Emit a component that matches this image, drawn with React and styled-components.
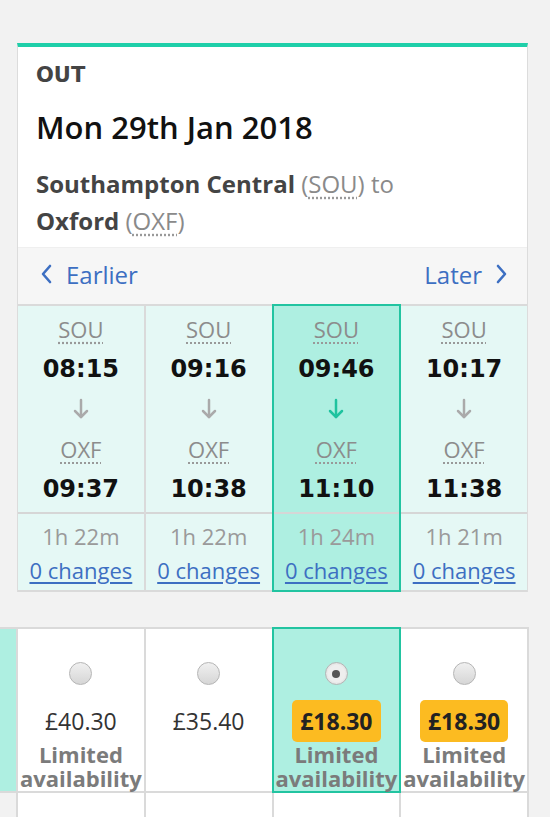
import React from "react";
import styled, { createGlobalStyle, css } from "styled-components";

const Global = createGlobalStyle`
  html, body { margin: 0; padding: 0; background: #f2f2f2; }
  body { font-family: "Open Sans", "Noto Sans", sans-serif; }
  * { box-sizing: border-box; }
`;

const Page = styled.div`
  width: 550px;
  height: 817px;
  padding-top: 43px;
  overflow: hidden;
`;

const Card = styled.section`
  margin-left: 17px;
  width: 511px;
  border-top: 4px solid #1fcfa9;
  border-left: 1px solid #dcdcdc;
  border-right: 1px solid #dcdcdc;
  background: #fff;
`;

const Header = styled.header`
  padding: 14px 18px 8px;
`;

const Direction = styled.div`
  font: 700 21px/28px "DejaVu Sans", sans-serif;
  color: #444;
`;

const DateTitle = styled.h1`
  margin: 18px 0 0;
  font: 600 31px/40px "Open Sans", sans-serif;
  color: #111;
`;

const Route = styled.p`
  margin: 18px 0 0;
  font: 400 24px/37px "Open Sans", sans-serif;
  color: #8a8a8a;
`;

const Station = styled.strong`
  font-weight: 700;
  color: #444;
`;

const Code = styled.span`
  text-decoration: underline dotted #999;
  text-underline-offset: 4px;
`;

const Nav = styled.nav`
  display: flex;
  justify-content: space-between;
  align-items: center;
  height: 57px;
  padding: 0 19px 4px 22px;
  background: #f6f6f6;
  border-top: 1px solid #efefef;
`;

const NavLink = styled.a`
  display: flex;
  align-items: center;
  gap: 13px;
  color: #3d6fc2;
  font-size: 24px;
  text-decoration: none;
`;

const Journeys = styled.div`
  display: grid;
  grid-template-columns: repeat(4, 1fr);
  gap: 2px;
  background: #dadada;
  border-top: 2px solid #dadada;
  border-bottom: 2px solid #dadada;
`;

const Journey = styled.div`
  position: relative;
  display: flex;
  flex-direction: column;
  text-align: center;
  background: ${(p) => (p.$selected ? "#aeefe1" : "#e5f8f5")};
  ${(p) =>
    p.$selected &&
    css`
      z-index: 1;
      box-shadow: 0 0 0 2px #22c4a1;
    `}
`;

const Times = styled.div`
  display: flex;
  flex-direction: column;
  padding: 3px 0;
`;

const Slot = styled.div`
  height: 40px;
  display: flex;
  align-items: center;
  justify-content: center;
`;

const StationCode = styled.span`
  font-size: 22px;
  color: #8c8c8c;
  text-decoration: underline dotted #999;
  text-underline-offset: 4px;
`;

const Time = styled.span`
  font: 700 24px "DejaVu Sans", sans-serif;
  color: #111;
`;

const Summary = styled.div`
  border-top: 2px solid #d6d6d6;
  padding: 5px 0 3px;
  line-height: 34px;
  font-size: 22px;
`;

const Duration = styled.div`
  color: #9a9a9a;
`;

const Changes = styled.a`
  display: block;
  color: #3d6fc2;
  text-decoration: underline;
  text-underline-offset: 3px;
`;

const Prices = styled.div`
  margin-top: 35px;
  width: 529px;
  display: grid;
  grid-template-columns: 16px repeat(4, 1fr);
  grid-auto-rows: 162px;
  gap: 2px;
  background: #dadada;
  border-top: 2px solid #dadada;
  border-right: 2px solid #dadada;
`;

const Strip = styled.div`
  background: ${(p) => (p.$active ? "#aeefe1" : "#f2f2f2")};
`;

const PriceCell = styled.div`
  position: relative;
  display: flex;
  flex-direction: column;
  align-items: center;
  padding-top: 33px;
  background: ${(p) => (p.$selected ? "#aeefe1" : "#fff")};
  ${(p) =>
    p.$selected &&
    css`
      z-index: 1;
      box-shadow: 0 0 0 2px #22c4a1;
    `}
`;

const Radio = styled.span`
  width: 23px;
  height: 23px;
  border-radius: 50%;
  border: 1px solid #b5b5b5;
  background: linear-gradient(#f0f0f0, #d6d6d6);
  display: flex;
  align-items: center;
  justify-content: center;
  margin-bottom: 15px;
  &::after {
    content: "";
    width: 8px;
    height: 8px;
    border-radius: 50%;
    background: ${(p) => (p.$checked ? "#555" : "transparent")};
  }
  ${(p) =>
    p.$checked &&
    css`
      background: radial-gradient(#eee 55%, #cfcfcf);
    `}
`;

const Price = styled.div`
  height: 42px;
  display: flex;
  align-items: center;
  font-size: 23px;
  color: #333;
  ${(p) =>
    p.$cheap &&
    css`
      padding: 0 8px;
      border-radius: 5px;
      background: #fcbb21;
      font-weight: 700;
      color: #222;
    `}
`;

const Limited = styled.div`
  width: 100%;
  text-align: center;
  font: 700 22px/24px "Open Sans", sans-serif;
  color: #7b7b7b;
`;

const ArrowDown = ({ color }) => (
  <svg width="16" height="22" viewBox="0 0 16 22" fill="none" stroke={color} strokeWidth="2.5" strokeLinecap="round" strokeLinejoin="round">
    <path d="M8 2v17" />
    <path d="M2 13l6 6 6-6" />
  </svg>
);

const Chevron = ({ dir }) => (
  <svg width="13" height="20" viewBox="0 0 13 20" fill="none" stroke="#3d6fc2" strokeWidth="2.6" strokeLinecap="round" strokeLinejoin="round">
    {dir === "left" ? <path d="M10 2L3 10l7 8" /> : <path d="M3 2l7 8-7 8" />}
  </svg>
);

const journeys = [
  { dep: "08:15", arr: "09:37", dur: "1h 22m" },
  { dep: "09:16", arr: "10:38", dur: "1h 22m" },
  { dep: "09:46", arr: "11:10", dur: "1h 24m", selected: true },
  { dep: "10:17", arr: "11:38", dur: "1h 21m" },
];

const fares = [
  { price: "£40.30", limited: true },
  { price: "£35.40" },
  { price: "£18.30", cheap: true, limited: true, selected: true },
  { price: "£18.30", cheap: true, limited: true },
];

export default function App() {
  return (
    <>
      <Global />
      <Page>
        <Card>
          <Header>
            <Direction>OUT</Direction>
            <DateTitle>Mon 29th Jan 2018</DateTitle>
            <Route>
              <Station>Southampton Central</Station> (<Code>SOU</Code>) to
              <br />
              <Station>Oxford</Station> (<Code>OXF</Code>)
            </Route>
          </Header>
          <Nav>
            <NavLink>
              <Chevron dir="left" />
              Earlier
            </NavLink>
            <NavLink>
              Later
              <Chevron dir="right" />
            </NavLink>
          </Nav>
          <Journeys>
            {journeys.map((j, i) => (
              <Journey key={i} $selected={j.selected}>
                <Times>
                  <Slot>
                    <StationCode>SOU</StationCode>
                  </Slot>
                  <Slot>
                    <Time>{j.dep}</Time>
                  </Slot>
                  <Slot>
                    <ArrowDown color={j.selected ? "#1fc39f" : "#aaaaaa"} />
                  </Slot>
                  <Slot>
                    <StationCode>OXF</StationCode>
                  </Slot>
                  <Slot>
                    <Time>{j.arr}</Time>
                  </Slot>
                </Times>
                <Summary>
                  <Duration>{j.dur}</Duration>
                  <Changes>0 changes</Changes>
                </Summary>
              </Journey>
            ))}
          </Journeys>
        </Card>
        <Prices>
          <Strip $active />
          {fares.map((f, i) => (
            <PriceCell key={i} $selected={f.selected}>
              <Radio $checked={f.selected} />
              <Price $cheap={f.cheap}>{f.price}</Price>
              {f.limited && <Limited>Limited availability</Limited>}
            </PriceCell>
          ))}
          <Strip />
          {fares.map((f, i) => (
            <PriceCell key={"r2" + i} />
          ))}
        </Prices>
      </Page>
    </>
  );
}
